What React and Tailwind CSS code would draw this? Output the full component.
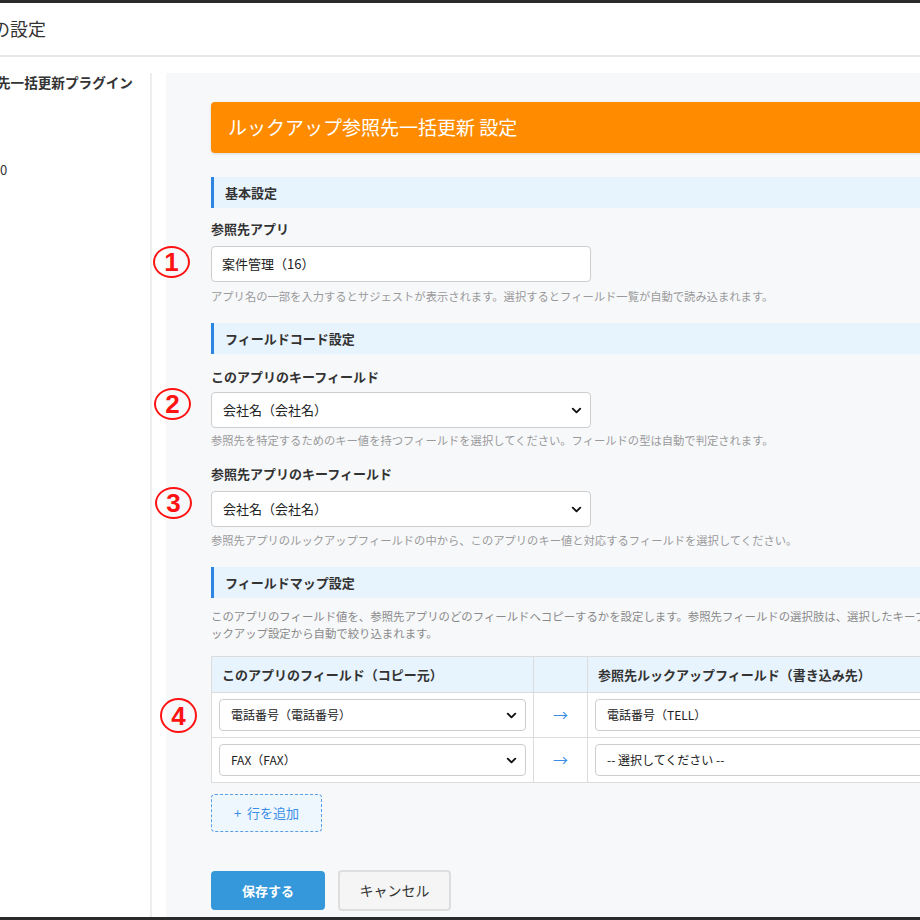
import { ChevronDown } from 'lucide-react';

// red circled step numbers laid over the form
function Marker({ n, className = '' }) {
  return (
    <span
      className={`absolute z-10 flex h-[32px] w-[37px] items-center justify-center rounded-[50%] border-2 border-[#ff1212] font-['Liberation_Sans',sans-serif] text-[26px] font-bold leading-none text-[#ff1212] ${className}`}
    >
      {n}
    </span>
  );
}

function SectionTitle({ children, className = '' }) {
  return (
    <div className={`flex h-[31px] items-center border-l-[3px] border-[#2a86e2] bg-[#e8f4fd] pl-[11px] text-[13px] font-bold text-[#333] ${className}`}>
      {children}
    </div>
  );
}

function FakeSelect({ value, className = '', text = 'text-[13px]' }) {
  return (
    <div className={`flex items-center justify-between rounded-[4px] border border-[#cdcdcd] bg-white pl-[11px] pr-[6px] text-[#222] ${text} ${className}`}>
      <span>{value}</span>
      <ChevronDown className="h-[15px] w-[15px] text-[#111]" strokeWidth={3} />
    </div>
  );
}

export default function App() {
  const rows = [
    { from: '電話番号（電話番号）', to: '電話番号（TELL）' },
    { from: 'FAX（FAX）', to: '-- 選択してください --' },
  ];

  return (
    <div className="flex h-[920px] w-[920px] flex-col overflow-hidden border-y-[3px] border-[#2b2b2b] bg-white font-['Noto_Sans_CJK_JP','Liberation_Sans',sans-serif] text-[#333]">
      {/* page header */}
      <div className="flex h-[54px] shrink-0 items-center border-b-2 border-[#e7e7e7] pb-[3px]">
        <h1 className="-ml-[8px] text-[18px] leading-none text-[#333]">の設定</h1>
      </div>

      <div className="flex flex-1 pt-[16px]">
        {/* sidebar */}
        <aside className="w-[152px] shrink-0 border-r-2 border-[#ededed]">
          <p className="-ml-[3px] whitespace-nowrap text-[13.6px] font-bold leading-[18px] text-[#333]">先一括更新プラグイン</p>
          <p className="mt-[70px] text-[13px] leading-[18px] text-[#333]">0</p>
        </aside>

        {/* settings panel */}
        <main className="ml-[14px] w-[860px] shrink-0 bg-[#f7f8fa] pl-[45px] pt-[29px]">
          <div className="w-[800px]">
            <div className="flex h-[51px] items-center rounded-[4px] bg-[#ff8c00] pl-[17px] text-[19px] text-white shadow-[0_1px_3px_rgba(0,0,0,0.12)]">
              ルックアップ参照先一括更新 設定
            </div>

            <SectionTitle className="mt-[24px]">基本設定</SectionTitle>
            <p className="mt-[12px] text-[13px] font-bold leading-[18px]">参照先アプリ</p>
            <div className="relative mt-[8px] w-[380px]">
              <Marker n="1" className="left-[-58px] top-[0px]" />
              <div className="flex h-[36px] items-center rounded-[4px] border border-[#cdcdcd] bg-white pl-[10px] text-[13px] text-[#222]">
                案件管理（16）
              </div>
            </div>
            <p className="mt-[6px] whitespace-nowrap text-[11.3px] leading-[16px] text-[#9a9a9a]">
              アプリ名の一部を入力するとサジェストが表示されます。選択するとフィールド一覧が自動で読み込まれます。
            </p>

            <SectionTitle className="mt-[19px]">フィールドコード設定</SectionTitle>
            <p className="mt-[14px] text-[13px] font-bold leading-[18px]">このアプリのキーフィールド</p>
            <div className="relative mt-[6px] w-[380px]">
              <Marker n="2" className="left-[-57px] top-[-4px]" />
              <FakeSelect value="会社名（会社名）" className="h-[36px]" />
            </div>
            <p className="mt-[4px] whitespace-nowrap text-[11.3px] leading-[16px] text-[#9a9a9a]">
              参照先を特定するためのキー値を持つフィールドを選択してください。フィールドの型は自動で判定されます。
            </p>

            <p className="mt-[17px] text-[13px] font-bold leading-[18px]">参照先アプリのキーフィールド</p>
            <div className="relative mt-[8px] w-[380px]">
              <Marker n="3" className="left-[-56px] top-[-4px]" />
              <FakeSelect value="会社名（会社名）" className="h-[36px]" />
            </div>
            <p className="mt-[5px] whitespace-nowrap text-[11.3px] leading-[16px] text-[#9a9a9a]">
              参照先アプリのルックアップフィールドの中から、このアプリのキー値と対応するフィールドを選択してください。
            </p>

            <SectionTitle className="mt-[19px]">フィールドマップ設定</SectionTitle>
            <p className="mt-[10px] whitespace-nowrap text-[11.4px] leading-[17px] text-[#8a8a8a]">
              このアプリのフィールド値を、参照先アプリのどのフィールドへコピーするかを設定します。参照先フィールドの選択肢は、選択したキーフィールドのル
              <br />
              ックアップ設定から自動で絞り込まれます。
            </p>

            {/* field map table */}
            <div className="relative mt-[14px]">
              <Marker n="4" className="left-[-51px] top-[42px] h-[35px] w-[36px]" />
              <table className="w-[800px] table-fixed border-collapse text-[13px]">
                <colgroup>
                  <col className="w-[322px]" />
                  <col className="w-[54px]" />
                  <col />
                </colgroup>
                <thead>
                  <tr className="h-[36px] bg-[#e8f4fd]">
                    <th className="border border-[#dcdcdc] pl-[10px] text-left font-bold text-[#333]">このアプリのフィールド（コピー元）</th>
                    <th className="border border-[#dcdcdc]" />
                    <th className="border border-[#dcdcdc] pl-[10px] text-left font-bold text-[#333]">参照先ルックアップフィールド（書き込み先）</th>
                  </tr>
                </thead>
                <tbody>
                  {rows.map((r) => (
                    <tr key={r.from} className="h-[45px] bg-white">
                      <td className="border border-[#dcdcdc] px-[7px]">
                        <FakeSelect value={r.from} text="text-[12px]" className="h-[32px]" />
                      </td>
                      <td className="border border-[#dcdcdc] text-center text-[15px] text-[#3a8ee6]">→</td>
                      <td className="border border-[#dcdcdc] px-[7px]">
                        <div className="flex h-[32px] items-center rounded-[4px] border border-[#cdcdcd] bg-white pl-[11px] text-[12px] text-[#222]">
                          {r.to}
                        </div>
                      </td>
                    </tr>
                  ))}
                </tbody>
              </table>
            </div>

            <button className="mt-[11px] flex h-[38px] w-[111px] items-center justify-center gap-[6px] rounded-[4px] border-[1.5px] border-dashed border-[#5b9fe3] bg-[#eef6fe] text-[13px] text-[#3a8ee6]">
              <span>+</span>
              <span>行を追加</span>
            </button>

            <div className="mt-[38px] flex items-center gap-[13px]">
              <button className="h-[39px] w-[114px] rounded-[4px] bg-[#3498db] text-[13px] font-bold text-white">保存する</button>
              <button className="h-[41px] w-[113px] rounded-[4px] border-2 border-[#dedede] bg-[#f5f5f5] text-[14px] text-[#333]">キャンセル</button>
            </div>
          </div>
        </main>
      </div>
    </div>
  );
}
